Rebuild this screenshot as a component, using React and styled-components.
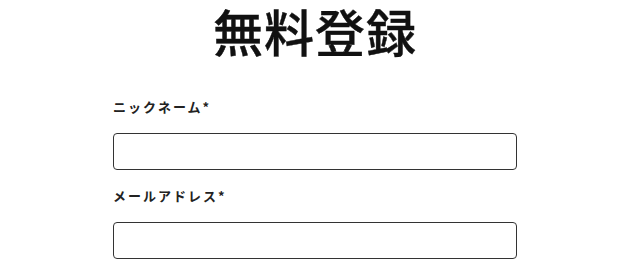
import styled, { createGlobalStyle } from "styled-components";

const GlobalStyle = createGlobalStyle`
  body {
    margin: 0;
    background: #fff;
    font-family: "Noto Sans CJK JP", "Noto Sans", sans-serif;
    color: #111;
  }
`;

const Page = styled.div`
  width: 630px;
  display: flex;
  flex-direction: column;
  align-items: center;
`;

const Title = styled.h1`
  margin: 0;
  padding-top: 2px;
  font-size: 50px;
  line-height: 56px;
  font-weight: 500;
  letter-spacing: 1px;
  -webkit-text-stroke: 0.4px #111;
`;

const Form = styled.form`
  width: 404px;
  margin-top: 39px;
  display: flex;
  flex-direction: column;
`;

const Field = styled.div`
  display: flex;
  flex-direction: column;
  margin-bottom: 16px;
`;

const Label = styled.label`
  font-size: 13px;
  font-weight: 700;
  line-height: 20px;
  letter-spacing: 2px;
  color: #222;
  margin-bottom: 16px;
`;

const Input = styled.input`
  box-sizing: border-box;
  width: 100%;
  height: 37px;
  border: 1px solid #333;
  border-radius: 4px;
  background: #fff;
  padding: 0 10px;
  font-size: 14px;
`;

export default function App() {
  return (
    <>
      <GlobalStyle />
      <Page>
        <Title>無料登録</Title>
        <Form>
          <Field>
            <Label>ニックネーム*</Label>
            <Input type="text" />
          </Field>
          <Field>
            <Label>メールアドレス*</Label>
            <Input type="email" />
          </Field>
        </Form>
      </Page>
    </>
  );
}
